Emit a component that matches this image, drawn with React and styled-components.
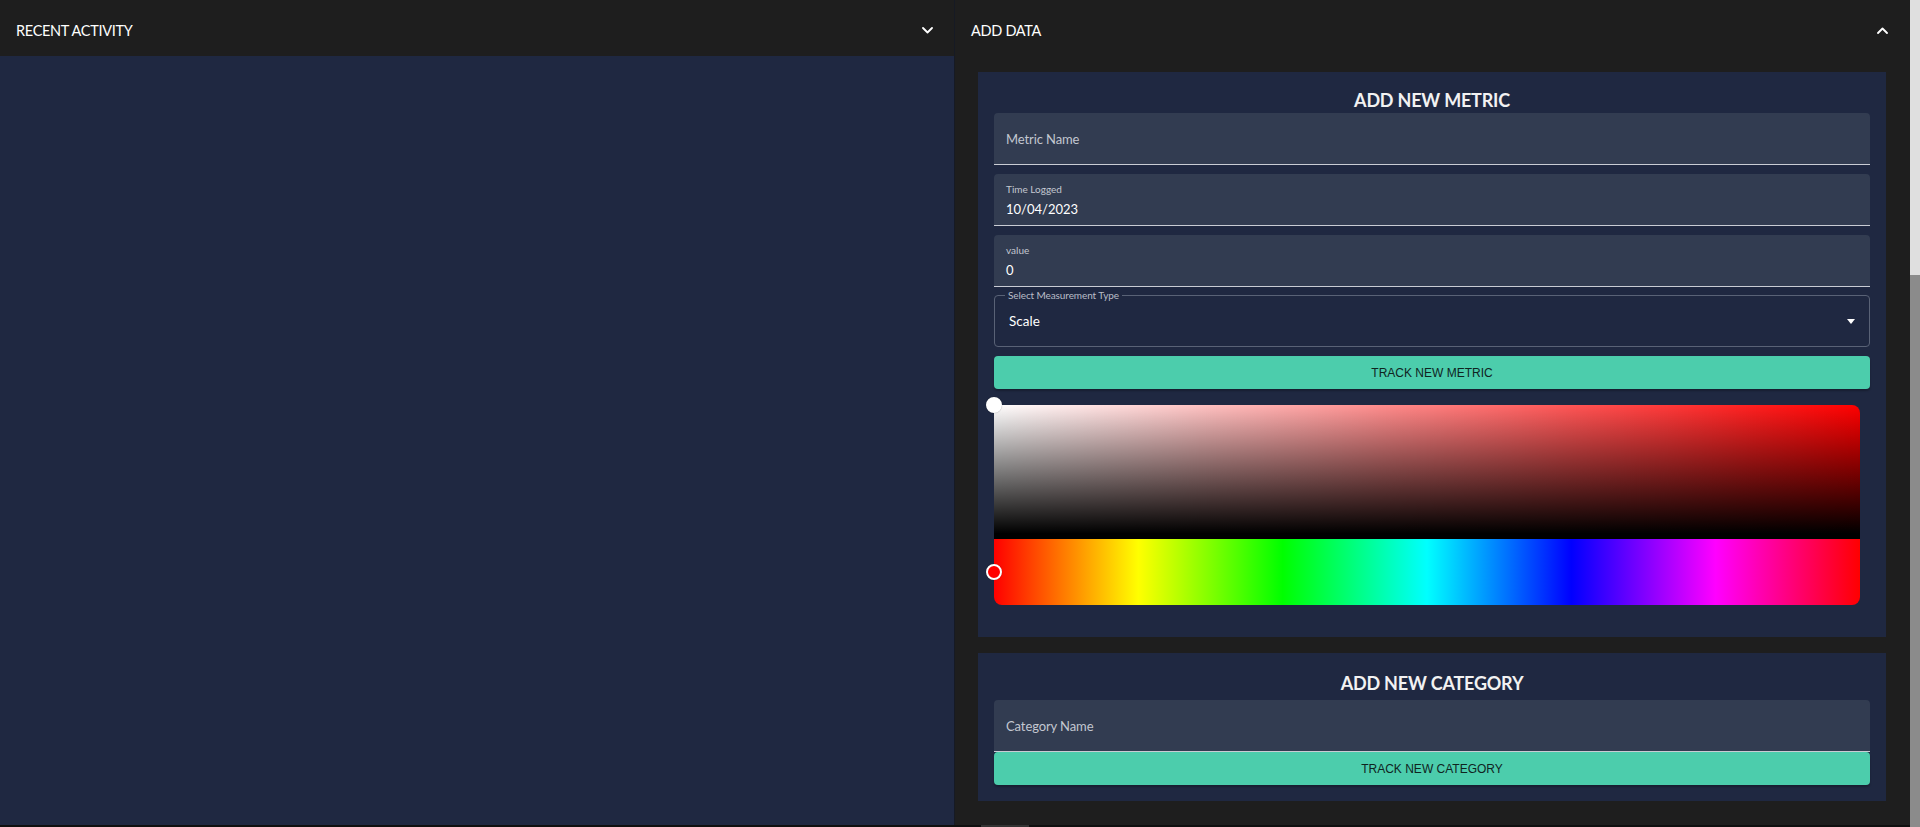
import React from "react";
import styled, { createGlobalStyle } from "styled-components";

const Global = createGlobalStyle`
  html, body { margin: 0; padding: 0; height: 100%; overflow: hidden; background: #1e1e1e; }
  #root { height: 100%; }
  * { box-sizing: border-box; }
`;

const Page = styled.div`
  display: flex;
  height: 100vh;
  width: 100vw;
  font-family: Lato, "Open Sans", sans-serif;
`;

const Main = styled.div`
  flex: 1;
  display: flex;
  flex-direction: column;
  min-width: 0;
`;

const Columns = styled.div`
  flex: 1;
  display: flex;
  min-height: 0;
`;

const LeftPanel = styled.section`
  width: 954px;
  display: flex;
  flex-direction: column;
`;

const Divider = styled.div`
  width: 1px;
  background: #161a24;
`;

const RightPanel = styled.section`
  flex: 1;
  display: flex;
  flex-direction: column;
  background: #1e1e1e;
  min-width: 0;
`;

const Header = styled.header`
  height: 56px;
  flex: none;
  display: flex;
  align-items: center;
  justify-content: space-between;
  padding: ${(p) => (p.$right ? "4px 22px 0 16px" : "4px 21px 0 16px")};
  background: #1e1e1e;
  color: #ffffff;
  font-size: 14.5px;
  letter-spacing: -0.3px;
  text-transform: uppercase;
`;

const LeftBody = styled.div`
  flex: 1;
  background: #1f2841;
`;

const RightBody = styled.div`
  flex: 1;
  display: flex;
  flex-direction: column;
  gap: 16px;
  padding: 16px 24px 0 23px;
`;

const Card = styled.div`
  background: #1f2841;
  padding: ${(p) => p.$pt}px 16px ${(p) => p.$pb}px 16px;
  display: flex;
  flex-direction: column;
`;

const Title = styled.h2`
  margin: 0 0 ${(p) => p.$mb}px;
  height: 26px;
  line-height: 26px;
  text-align: center;
  color: #f2f2f2;
  font-size: 18px;
  font-weight: 700;
  letter-spacing: -0.2px;
`;

const Field = styled.div`
  position: relative;
  height: 52px;
  flex: none;
  margin-bottom: ${(p) => p.$mb || 0}px;
  background: #323c51;
  border-radius: 4px 4px 0 0;
  border-bottom: 1px solid #c9ccd4;
  padding: 0 12px;
  display: flex;
  flex-direction: column;
  justify-content: ${(p) => (p.$filled ? "flex-start" : "center")};
`;

const Placeholder = styled.span`
  color: #c3c7d0;
  font-size: 13px;
  letter-spacing: -0.1px;
`;

const SmallLabel = styled.span`
  color: #c3c7d0;
  font-size: 10px;
  margin-top: 9px;
  line-height: 12px;
`;

const Value = styled.span`
  color: #ffffff;
  font-size: 13px;
  margin-top: 6px;
  line-height: 16px;
`;

const Select = styled.div`
  position: relative;
  height: 52px;
  flex: none;
  margin-bottom: 9px;
  border: 1px solid #596276;
  border-radius: 4px;
  display: flex;
  align-items: center;
  justify-content: space-between;
  padding: 0 14px 0 14px;
  color: #ffffff;
  font-size: 13.5px;
`;

const SelectLabel = styled.span`
  position: absolute;
  top: -7px;
  left: 10px;
  padding: 0 3px;
  background: #1f2841;
  color: #b9bdc7;
  font-size: 10px;
  line-height: 12px;
  letter-spacing: -0.1px;
`;

const Caret = styled.span`
  width: 0;
  height: 0;
  border-left: 4px solid transparent;
  border-right: 4px solid transparent;
  border-top: 5px solid #ffffff;
`;

const Button = styled.button`
  height: 33px;
  flex: none;
  width: 100%;
  border: none;
  border-radius: 4px;
  background: #4ccdac;
  color: #10241f;
  font-family: "Liberation Sans", Arial, sans-serif;
  font-size: 12px;
  text-transform: uppercase;
  box-shadow: 0 2px 2px rgba(0, 0, 0, 0.25);
  cursor: pointer;
`;

const Picker = styled.div`
  position: relative;
  margin-top: 16px;
  width: 866px;
  height: 200px;
  display: flex;
  flex-direction: column;
`;

const Saturation = styled.div`
  height: 134px;
  border-radius: 8px 8px 0 0;
  background:
    linear-gradient(to top, #000 4%, rgba(0, 0, 0, 0) 100%),
    linear-gradient(to right, #fff, rgba(255, 255, 255, 0)),
    #ff0000;
`;

const Hue = styled.div`
  height: 66px;
  border-radius: 0 0 8px 8px;
  background: linear-gradient(
    to right,
    #ff0000 0%,
    #ffff00 16.67%,
    #00ff00 33.33%,
    #00ffff 50%,
    #0000ff 66.67%,
    #ff00ff 83.33%,
    #ff0000 100%
  );
`;

const Handle = styled.span`
  position: absolute;
  left: -8px;
  top: ${(p) => p.$top}px;
  width: 16px;
  height: 16px;
  border-radius: 50%;
  border: 2px solid #ffffff;
  background: ${(p) => p.$fill};
  box-shadow: 0 0 1px rgba(0, 0, 0, 0.4);
`;

const VScroll = styled.div`
  width: 10px;
  flex: none;
  display: flex;
  flex-direction: column;
  background: #dfdfdf;
`;

const VThumb = styled.div`
  margin-top: 275px;
  flex: 1;
  background: #8b8b8b;
`;

const HScroll = styled.div`
  height: 2px;
  flex: none;
  background: #0f0f0f;
  position: relative;
`;

const HThumb = styled.div`
  position: absolute;
  left: 981px;
  width: 48px;
  top: 0;
  bottom: 0;
  background: #333333;
`;

const Chevron = ({ up }) => (
  <svg width="11" height="7" viewBox="0 0 11 7" fill="none">
    <polyline
      points={up ? "1,6 5.5,1.5 10,6" : "1,1 5.5,5.5 10,1"}
      stroke="#ffffff"
      strokeWidth="1.8"
      strokeLinecap="round"
      strokeLinejoin="round"
    />
  </svg>
);

export default function App() {
  return (
    <Page>
      <Global />
      <Main>
        <Columns>
          <LeftPanel>
            <Header>
              <span>Recent Activity</span>
              <Chevron />
            </Header>
            <LeftBody />
          </LeftPanel>
          <Divider />
          <RightPanel>
            <Header $right>
              <span>Add Data</span>
              <Chevron up />
            </Header>
            <RightBody>
              <Card $pt={15} $pb={32}>
                <Title $mb={0}>ADD NEW METRIC</Title>
                <Field $mb={9}>
                  <Placeholder>Metric Name</Placeholder>
                </Field>
                <Field $mb={9} $filled>
                  <SmallLabel>Time Logged</SmallLabel>
                  <Value>10/04/2023</Value>
                </Field>
                <Field $mb={8} $filled>
                  <SmallLabel>value</SmallLabel>
                  <Value>0</Value>
                </Field>
                <Select>
                  <SelectLabel>Select Measurement Type</SelectLabel>
                  <span>Scale</span>
                  <Caret />
                </Select>
                <Button>Track New Metric</Button>
                <Picker>
                  <Saturation />
                  <Hue />
                  <Handle $top={-8} $fill="#ffffff" />
                  <Handle $top={159} $fill="#ff0000" />
                </Picker>
              </Card>
              <Card $pt={17} $pb={16}>
                <Title $mb={4}>ADD NEW CATEGORY</Title>
                <Field>
                  <Placeholder>Category Name</Placeholder>
                </Field>
                <Button>Track New Category</Button>
              </Card>
            </RightBody>
          </RightPanel>
        </Columns>
        <HScroll>
          <HThumb />
        </HScroll>
      </Main>
      <VScroll>
        <VThumb />
      </VScroll>
    </Page>
  );
}
